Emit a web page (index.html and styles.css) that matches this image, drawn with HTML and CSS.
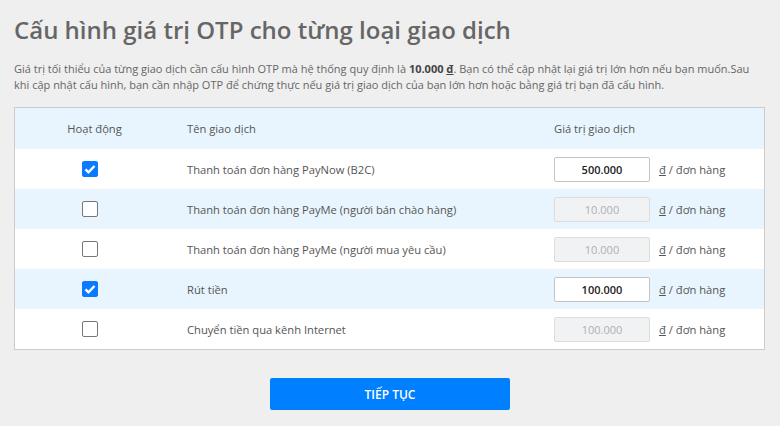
FILE: index.html
```html
<!DOCTYPE html>
<html lang="vi">
<head>
  <meta charset="UTF-8" />
  <meta name="viewport" content="width=device-width, initial-scale=1.0" />
  <title>Cấu hình OTP</title>
  <link rel="stylesheet" href="styles.css">
</head>
<body>
  <div class="page">
    <h1>Cấu hình giá trị OTP cho từng loại giao dịch</h1>
    <p class="desc">Giá trị tối thiểu của từng giao dịch cần cấu hình OTP mà hệ thống quy định là <b>10.000 <u>đ</u></b>. Bạn có thể cập nhật lại giá trị lớn hơn nếu bạn muốn.Sau khi cập nhật cấu hình, bạn cần nhập OTP để chứng thực nếu giá trị giao dịch của bạn lớn hơn hoặc bằng giá trị bạn đã cấu hình.</p>

    <div class="otp-table">
      <div class="row head">
        <div class="c-check">Hoạt động</div>
        <div class="c-name">Tên giao dịch</div>
        <div class="c-value">Giá trị giao dịch</div>
        <div class="c-unit"></div>
      </div>

      <div class="row">
        <div class="c-check"><input type="checkbox" checked></div>
        <div class="c-name">Thanh toán đơn hàng PayNow (B2C)</div>
        <div class="c-value"><input type="text" class="amount" value="500.000"></div>
        <div class="c-unit"><u>đ</u> / đơn hàng</div>
      </div>

      <div class="row alt">
        <div class="c-check"><input type="checkbox"></div>
        <div class="c-name">Thanh toán đơn hàng PayMe (người bán chào hàng)</div>
        <div class="c-value"><input type="text" class="amount" value="10.000" disabled></div>
        <div class="c-unit"><u>đ</u> / đơn hàng</div>
      </div>

      <div class="row">
        <div class="c-check"><input type="checkbox"></div>
        <div class="c-name">Thanh toán đơn hàng PayMe (người mua yêu cầu)</div>
        <div class="c-value"><input type="text" class="amount" value="10.000" disabled></div>
        <div class="c-unit"><u>đ</u> / đơn hàng</div>
      </div>

      <div class="row alt">
        <div class="c-check"><input type="checkbox" checked></div>
        <div class="c-name">Rút tiền</div>
        <div class="c-value"><input type="text" class="amount" value="100.000"></div>
        <div class="c-unit"><u>đ</u> / đơn hàng</div>
      </div>

      <div class="row">
        <div class="c-check"><input type="checkbox"></div>
        <div class="c-name">Chuyển tiền qua kênh Internet</div>
        <div class="c-value"><input type="text" class="amount" value="100.000" disabled></div>
        <div class="c-unit"><u>đ</u> / đơn hàng</div>
      </div>
    </div>

    <div class="actions">
      <button type="button" class="btn-next">TIẾP TỤC</button>
    </div>
  </div>
</body>
</html>
```

FILE: styles.css
```css
body {
  margin: 0;
  background: #efefef;
  font-family: "Open Sans", sans-serif;
  color: #555;
}
.page {
  padding: 14px 15px 0 14px;
}
h1 {
  margin: 0;
  font-size: 24px;
  line-height: 32px;
  font-weight: 600;
  color: #666;
}
.desc {
  margin: 15px 0 0;
  font-size: 11px;
  line-height: 16px;
  color: #666;
}
.desc b {
  color: #444;
}
.otp-table {
  margin-top: 14px;
  border: 1px solid #ccc;
  background: #fff;
}
.row {
  display: grid;
  grid-template-columns: 149px 390px 96px 1fr;
  align-items: center;
  height: 40px;
  font-size: 11.2px;
  color: #555;
}
.row.head {
  height: 41px;
  background: #e8f5fe;
}
.row.head .c-check {
  padding-left: 10px;
}
.row.alt {
  background: #e8f5fe;
}
.c-check {
  display: flex;
  justify-content: center;
  align-items: center;
}
.c-name {
  padding-left: 23px;
}
.c-unit {
  padding-left: 9px;
}
input[type="checkbox"] {
  appearance: none;
  -webkit-appearance: none;
  width: 16px;
  height: 16px;
  margin: 0 0 0 1px;
  border: 1px solid #777;
  border-radius: 2px;
  background: #fff;
}
input[type="checkbox"]:checked {
  border-color: #0a7bff;
  background: #0a7bff url("data:image/svg+xml,%3Csvg xmlns='http://www.w3.org/2000/svg' viewBox='0 0 16 16'%3E%3Cpath d='M3.5 8.3l3 3 6-6.3' fill='none' stroke='%23fff' stroke-width='2.4'/%3E%3C/svg%3E") center / 16px no-repeat;
}
.amount {
  box-sizing: border-box;
  width: 96px;
  height: 25px;
  padding: 0 6px;
  border: 1px solid #c4c4c4;
  border-radius: 2px;
  background: #fff;
  font-family: "Open Sans", sans-serif;
  font-size: 11px;
  font-weight: 600;
  color: #222;
  text-align: center;
}
.amount:disabled {
  background: #f1f2f4;
  border-color: #dcdcdc;
  color: #b0b0b0;
  font-weight: 400;
}
.actions {
  display: flex;
  justify-content: center;
  margin-top: 28px;
  padding-left: 1px;
}
.btn-next {
  width: 240px;
  height: 32px;
  border: none;
  border-radius: 2px;
  background: #0080ff;
  color: #fff;
  font-family: "Open Sans", sans-serif;
  font-size: 12px;
  font-weight: 600;
  cursor: pointer;
}
```
